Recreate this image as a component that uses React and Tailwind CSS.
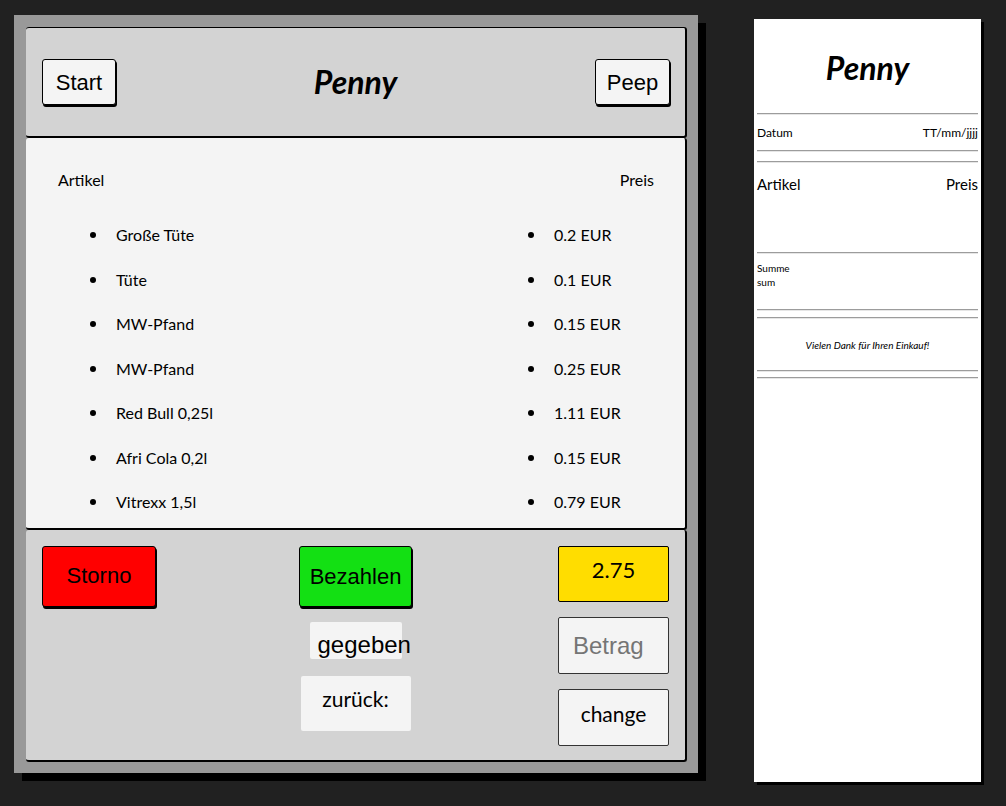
import React from 'react'

const items = [
  ['Große Tüte', '0.2 EUR'],
  ['Tüte', '0.1 EUR'],
  ['MW-Pfand', '0.15 EUR'],
  ['MW-Pfand', '0.25 EUR'],
  ['Red Bull 0,25l', '1.11 EUR'],
  ['Afri Cola 0,2l', '0.15 EUR'],
  ['Vitrexx 1,5l', '0.79 EUR'],
]

const calibri = "font-['Lato','Open_Sans',sans-serif]"
const arial = "font-['Liberation_Sans',Arial,sans-serif]"

function Rule() {
  return <div className="mx-[3px] border-t border-b border-t-[#9c9c9c] border-b-[#e6e6e6]" />
}

function Bullet({ children }) {
  return (
    <li className="flex items-center gap-[20px]">
      <span className="h-[6px] w-[6px] rounded-full bg-black" />
      <span>{children}</span>
    </li>
  )
}

function Receipt() {
  return (
    <div className={`${calibri} mt-[19px] ml-[56px] h-[763px] w-[227px] bg-white text-black shadow-[3px_3px_0_#000]`}>
      <h1 className="mt-[29px] h-[40px] text-center text-[32px] font-bold italic leading-[40px]">Penny</h1>
      <div className="mt-[25px]" />
      <Rule />
      <div className="mx-[3px] mt-[10px] flex h-4 justify-between text-[12px] leading-4">
        <span>Datum</span>
        <span>TT/mm/jjjj</span>
      </div>
      <div className="mt-[9px]" />
      <Rule />
      <div className="mt-[9px]" />
      <Rule />
      <div className="mx-[3px] mt-[11px] flex h-5 justify-between text-[15px] leading-5">
        <span>Artikel</span>
        <span>Preis</span>
      </div>
      <div className="mt-[58px]" />
      <Rule />
      <div className="mx-[3px] mt-[7px] text-[10px] leading-[14px]">
        <div>Summe</div>
        <div>sum</div>
      </div>
      <div className="mt-[20px]" />
      <Rule />
      <div className="mt-[6px]" />
      <Rule />
      <p className="mt-[19px] text-center text-[10px] italic leading-[14px]">Vielen Dank für Ihren Einkauf!</p>
      <div className="mt-[18px]" />
      <Rule />
      <div className="mt-[5px]" />
      <Rule />
    </div>
  )
}

function Register() {
  return (
    <div className="mt-[15px] ml-[14px] h-[758px] w-[684px] bg-[#999] pt-[12px] pl-[12px] pr-[11px] shadow-[8px_8px_0_#000]">
      {/* header */}
      <div className="flex h-[111px] items-center justify-between rounded-[3px] border-t border-r-2 border-b-2 border-black bg-[#d3d3d3] pl-[16px] pr-[15px]">
        <button className={`${arial} h-[46px] w-[74px] rounded-[3px] border border-black bg-[#f4f4f4] text-[22px] shadow-[1px_2px_0_#000]`}>
          Start
        </button>
        <h1 className={`${calibri} text-[32px] font-bold italic`}>Penny</h1>
        <button className={`${arial} h-[46px] w-[75px] rounded-[3px] border border-black bg-[#f4f4f4] text-[22px] shadow-[1px_2px_0_#000]`}>
          Peep
        </button>
      </div>

      {/* article list */}
      <div className={`${calibri} h-[392px] overflow-hidden rounded-[3px] border-r-2 border-b-2 border-black bg-[#f4f4f4] pt-[30px] text-[16px] leading-6 text-black`}>
        <div className="flex justify-between pl-[32px] pr-[31px]">
          <span>Artikel</span>
          <span>Preis</span>
        </div>
        <div className="mt-[31px] flex">
          <ul className="ml-[64px] flex w-[438px] flex-col gap-[20.5px]">
            {items.map(([name], i) => (
              <Bullet key={i}>{name}</Bullet>
            ))}
          </ul>
          <ul className="flex flex-col gap-[20.5px]">
            {items.map(([, price], i) => (
              <Bullet key={i}>{price}</Bullet>
            ))}
          </ul>
        </div>
      </div>

      {/* actions */}
      <div className="grid h-[232px] grid-cols-[1fr_auto_1fr] rounded-[3px] border-r-2 border-b-2 border-black bg-[#d3d3d3] pt-[16px] pl-[16px] pr-[16px]">
        <div>
          <button className={`${arial} h-[61px] w-[114px] rounded-[3px] border border-black bg-[#ff0000] pb-[2px] text-[22px] shadow-[1px_2px_0_#000]`}>
            Storno
          </button>
        </div>
        <div className="flex flex-col items-center">
          <button className={`${arial} h-[61px] w-[113px] rounded-[3px] border border-black bg-[#13e013] text-[22px] shadow-[1px_2px_0_#000]`}>
            Bezahlen
          </button>
          <div className={`${arial} mt-[15px] h-[37px] w-[92px] whitespace-nowrap rounded-[2px] bg-[#f4f4f4] pl-[8px] text-[24px] leading-[46px]`}>
            gegeben
          </div>
          <div className={`${calibri} mt-[17px] flex h-[55px] w-[110px] items-center justify-center rounded-[2px] bg-[#f4f4f4] pb-[10px] text-[21px]`}>
            zurück:
          </div>
        </div>
        <div className="flex flex-col items-end gap-[15px]">
          <div className={`${calibri} flex h-[56px] w-[111px] items-center justify-center rounded-[2px] border border-black bg-[#ffdd00] pb-[9px] text-[22px]`}>
            2.75
          </div>
          <div className={`${arial} flex h-[57px] w-[111px] items-center rounded-[2px] border border-[#333] bg-[#f4f4f4] pl-[14px] text-[24px] text-[#757575]`}>
            Betrag
          </div>
          <div className={`${calibri} flex h-[57px] w-[111px] items-center justify-center rounded-[2px] border border-[#333] bg-[#f4f4f4] pb-[8px] text-[21px]`}>
            change
          </div>
        </div>
      </div>
    </div>
  )
}

export default function App() {
  return (
    <div className="flex h-[806px] w-[1006px] overflow-hidden bg-[#212121]">
      <Register />
      <Receipt />
    </div>
  )
}
